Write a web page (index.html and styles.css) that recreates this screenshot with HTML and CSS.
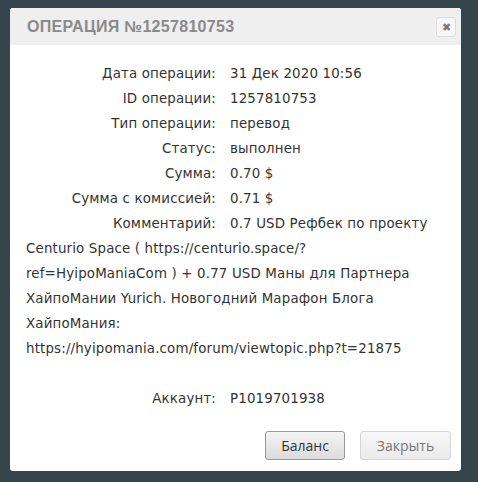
FILE: index.html
```html
<!DOCTYPE html>
<html lang="ru">
<head>
    <meta charset="UTF-8">
    <title>Операция</title>
    <link rel="stylesheet" href="styles.css">
</head>
<body>
    <div class="modal">
        <div class="modal-header">
            <h2>Операция №1257810753</h2>
            <button class="close-btn">&#10006;</button>
        </div>

        <div class="modal-body">
            <div class="row"><span class="label">Дата операции:</span>31 Дек 2020 10:56</div>
            <div class="row"><span class="label">ID операции:</span>1257810753</div>
            <div class="row"><span class="label">Тип операции:</span>перевод</div>
            <div class="row"><span class="label">Статус:</span>выполнен</div>
            <div class="row"><span class="label">Сумма:</span>0.70 $</div>
            <div class="row"><span class="label">Сумма с комиссией:</span>0.71 $</div>
            <div class="row"><span class="label">Комментарий:</span>0.7 USD Рефбек по проекту Centurio Space ( https://centurio.space/?ref=HyipoManiaCom ) + 0.77 USD Маны для Партнера ХайпоМании Yurich. Новогодний Марафон Блога ХайпоМания: https://hyipomania.com/forum/viewtopic.php?t=21875</div>
            <div class="row account"><span class="label">Аккаунт:</span>P1019701938</div>
        </div>

        <div class="modal-footer">
            <button class="btn btn-main">Баланс</button>
            <button class="btn btn-light">Закрыть</button>
        </div>
    </div>
</body>
</html>
```

FILE: styles.css
```css
/* General */
* {
    margin: 0;
    padding: 0;
    box-sizing: border-box;
}

body {
    background: #36454c;
    font-family: "DejaVu Sans", sans-serif;
    height: 100vh;
    overflow: hidden;
}

/* Dialog */
.modal {
    width: 451px;
    height: 463px;
    margin: 8px 0 0 10px;
    background: #fff;
    border-radius: 3px;
    display: flex;
    flex-direction: column;
    overflow: hidden;
}

.modal-header {
    height: 37px;
    background: #efefef;
    display: flex;
    align-items: center;
    justify-content: space-between;
    padding: 0 5px 0 17px;
}

.modal-header h2 {
    font-family: "Liberation Sans", Arial, sans-serif;
    font-size: 16px;
    font-weight: bold;
    text-transform: uppercase;
    letter-spacing: 0.3px;
    color: #8a8a8a;
}

.close-btn {
    width: 20px;
    height: 20px;
    border: 1px solid #dcdcdc;
    border-radius: 3px;
    background: #f7f7f7;
    color: #7a7a7a;
    font-size: 11px;
    line-height: 18px;
    text-align: center;
    cursor: pointer;
}

/* Details */
.modal-body {
    flex: 1;
    padding: 16px 25px 0 16px;
    font-size: 13.4px;
    letter-spacing: 0.15px;
    line-height: 25px;
    color: #333;
}

.row .label {
    display: inline-block;
    width: 190px;
    margin-right: 14px;
    text-align: right;
}

.row.account {
    margin-top: 25px;
}

/* Buttons */
.modal-footer {
    display: flex;
    justify-content: flex-end;
    gap: 15px;
    padding: 0 10px 11px 0;
}

.btn {
    height: 29px;
    border-radius: 3px;
    font-family: "Open Sans", sans-serif;
    font-size: 14px;
    cursor: pointer;
}

.btn-main {
    width: 80px;
    border: 1px solid #9a9a9a;
    background: linear-gradient(#f4f4f4, #dcdcdc);
    color: #333;
}

.btn-light {
    width: 91px;
    border: 1px solid #d6d6d6;
    background: linear-gradient(#f7f7f7, #ebebeb);
    color: #777;
}
```
